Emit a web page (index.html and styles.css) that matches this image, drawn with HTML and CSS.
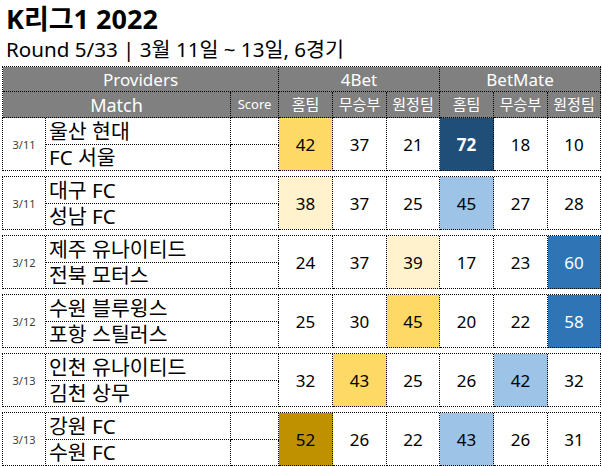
FILE: index.html
```html
<!DOCTYPE html>
<html lang="ko">
<head>
<meta charset="utf-8">
<link rel="stylesheet" href="styles.css">
</head>
<body>
<h1 class="title">K리그1 2022</h1>
<p class="subtitle">Round 5/33 | 3월 11일 ~ 13일, 6경기</p>

<div class="sheet">
  <div class="head">
    <div class="hc h-prov">Providers</div>
    <div class="hc h-4bet">4Bet</div>
    <div class="hc h-bm">BetMate</div>
    <div class="hc h-match">Match</div>
    <div class="hc h-score">Score</div>
    <div class="hc h-sub">홈팀</div>
    <div class="hc h-sub">무승부</div>
    <div class="hc h-sub">원정팀</div>
    <div class="hc h-sub">홈팀</div>
    <div class="hc h-sub">무승부</div>
    <div class="hc h-sub">원정팀</div>
  </div>

  <div class="group first">
    <div class="c date">3/11</div>
    <div class="c team">울산 현대</div>
    <div class="c score"></div>
    <div class="c odd y2">42</div>
    <div class="c odd">37</div>
    <div class="c odd">21</div>
    <div class="c odd b3">72</div>
    <div class="c odd">18</div>
    <div class="c odd">10</div>
    <div class="c team">FC 서울</div>
    <div class="c score"></div>
  </div>

  <div class="group">
    <div class="c date">3/11</div>
    <div class="c team">대구 FC</div>
    <div class="c score"></div>
    <div class="c odd y1">38</div>
    <div class="c odd">37</div>
    <div class="c odd">25</div>
    <div class="c odd b1">45</div>
    <div class="c odd">27</div>
    <div class="c odd">28</div>
    <div class="c team">성남 FC</div>
    <div class="c score"></div>
  </div>

  <div class="group">
    <div class="c date">3/12</div>
    <div class="c team">제주 유나이티드</div>
    <div class="c score"></div>
    <div class="c odd">24</div>
    <div class="c odd">37</div>
    <div class="c odd y1">39</div>
    <div class="c odd">17</div>
    <div class="c odd">23</div>
    <div class="c odd b2">60</div>
    <div class="c team">전북 모터스</div>
    <div class="c score"></div>
  </div>

  <div class="group">
    <div class="c date">3/12</div>
    <div class="c team">수원 블루윙스</div>
    <div class="c score"></div>
    <div class="c odd">25</div>
    <div class="c odd">30</div>
    <div class="c odd y2">45</div>
    <div class="c odd">20</div>
    <div class="c odd">22</div>
    <div class="c odd b2">58</div>
    <div class="c team">포항 스틸러스</div>
    <div class="c score"></div>
  </div>

  <div class="group">
    <div class="c date">3/13</div>
    <div class="c team">인천 유나이티드</div>
    <div class="c score"></div>
    <div class="c odd">32</div>
    <div class="c odd y2">43</div>
    <div class="c odd">25</div>
    <div class="c odd">26</div>
    <div class="c odd b1">42</div>
    <div class="c odd">32</div>
    <div class="c team">김천 상무</div>
    <div class="c score"></div>
  </div>

  <div class="group">
    <div class="c date">3/13</div>
    <div class="c team">강원 FC</div>
    <div class="c score"></div>
    <div class="c odd y3">52</div>
    <div class="c odd">26</div>
    <div class="c odd">22</div>
    <div class="c odd b1">43</div>
    <div class="c odd">26</div>
    <div class="c odd">31</div>
    <div class="c team">수원 FC</div>
    <div class="c score"></div>
  </div>
</div>
</body>
</html>
```

FILE: styles.css
```css
html, body {
  margin: 0;
  padding: 0;
  background: #ffffff;
}

body {
  font-family: "Noto Sans", "Noto Sans CJK KR", sans-serif;
  color: #000000;
  padding: 0 0 0 2px;
}

.title {
  margin: 0;
  padding: 3px 0 0 4px;
  font-size: 27px;
  line-height: 32px;
  height: 32px;
  font-weight: bold;
}

.subtitle {
  margin: 0;
  padding: 0 0 0 4px;
  font-size: 20.6px;
  line-height: 28px;
  height: 31px;
  white-space: nowrap;
}

.sheet {
  width: 599px;
}

.head,
.group {
  display: grid;
  grid-template-columns: 43px 185px 48px 54px 54px 53px 54px 54px 53px;
  border-left: 1px dotted #000;
  box-sizing: border-box;
  width: 599px;
}

.head {
  border-top: 1px dotted #000;
  grid-template-rows: 25px 26px;
}

.hc {
  background: #808080;
  color: #ffffff;
  border-right: 1px dotted #000;
  border-bottom: 1px dotted #000;
  box-sizing: border-box;
  display: flex;
  align-items: center;
  justify-content: center;
  font-size: 17px;
  line-height: 1;
}

.h-prov { grid-column: 1 / 4; }
.h-4bet { grid-column: 4 / 7; }
.h-bm { grid-column: 7 / 10; }
.h-match { grid-column: 1 / 3; font-size: 18px; }
.h-score { font-size: 13px; }
.h-sub { font-size: 15px; }

.group {
  grid-template-rows: 27px 26px;
  border-top: 1px dotted #000;
  margin-top: 5px;
}

.group.first {
  border-top: none;
  margin-top: 0;
}

.c {
  border-right: 1px dotted #000;
  border-bottom: 1px dotted #000;
  box-sizing: border-box;
  display: flex;
  align-items: center;
}

.date {
  grid-row: span 2;
  justify-content: center;
  font-size: 11px;
  color: #404040;
}

.team {
  font-size: 20.5px;
  padding-left: 3px;
  line-height: 1;
  white-space: nowrap;
}

.odd {
  grid-row: span 2;
  justify-content: center;
  font-size: 17px;
}

.y1 { background: #fff2cc; }
.y2 { background: #ffd966; }
.y3 { background: #bf9000; }
.b1 { background: #9dc3e6; }
.b2 { background: #2e75b6; color: #ffffff; }
.b3 { background: #1f4e79; color: #ffffff; font-weight: bold; }
```
